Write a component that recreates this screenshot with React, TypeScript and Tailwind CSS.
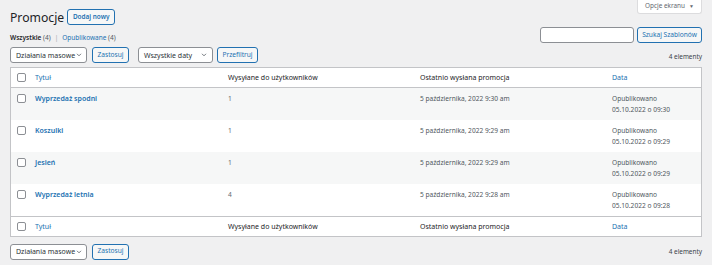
import React from "react";

const rows = [
  { t: "Wyprzedaż spodni", n: "1", last: "5 października, 2022 9:30 am", d: "05.10.2022 o 09:30" },
  { t: "Koszulki", n: "1", last: "5 października, 2022 9:29 am", d: "05.10.2022 o 09:29" },
  { t: "Jesień", n: "1", last: "5 października, 2022 9:29 am", d: "05.10.2022 o 09:29" },
  { t: "Wyprzedaż letnia", n: "4", last: "5 października, 2022 9:28 am", d: "05.10.2022 o 09:28" },
];

function Check() {
  return <span className="block w-[9px] h-[9px] border border-[#8c8f94] rounded-[2px] bg-white" />;
}

function Chevron() {
  return (
    <svg width="8" height="8" viewBox="0 0 20 20" className="shrink-0">
      <path d="M5 7 L10 12 L15 7" fill="none" stroke="#50575e" strokeWidth="2" />
    </svg>
  );
}

function Select({ label, w }: { label: string; w: string }) {
  return (
    <div className={`${w} h-[16px] border border-[#8c8f94] rounded-[3px] bg-white flex items-center justify-between pl-[5px] pr-[4px] text-[7px] text-[#2c3338] whitespace-nowrap`}>
      <span className="leading-none">{label}</span>
      <Chevron />
    </div>
  );
}

function Btn({ label, w }: { label: string; w: string }) {
  return (
    <div className={`${w} h-[16px] border border-[#2271b1] rounded-[3px] bg-[#f6f7f7] flex items-center justify-center text-[6.6px] text-[#2271b1] leading-none whitespace-nowrap`}>
      {label}
    </div>
  );
}

function HeadRow({ top }: { top: boolean }) {
  return (
    <div className={`flex items-center h-[20px] ${top ? "border-b" : "border-t"} border-[#c3c4c7] text-[7px] leading-none`}>
      <div className="w-[19px] pl-[6px]"><Check /></div>
      <div className="w-[193px] pl-[5px] text-[#2271b1]">Tytuł</div>
      <div className="w-[192px] pl-[5px] text-[#1d2327]">Wysyłane do użytkowników</div>
      <div className="w-[192px] pl-[5px] text-[#1d2327]">Ostatnio wysłana promocja</div>
      <div className="flex-1 pl-[5px] text-[#2271b1]">Data</div>
    </div>
  );
}

export default function App() {
  return (
    <div className="w-[712px] h-[265px] bg-[#f0f0f1] overflow-hidden px-[10px] font-['Noto_Sans',sans-serif] text-[#3c434a]">
      <div className="flex justify-between items-start h-[27px]">
        <div className="flex items-center pt-[9px] gap-[3px]">
          <h1 className="text-[12.2px] leading-[15px] text-[#1d2327] font-normal">Promocje</h1>
          <div className="h-[16px] w-[48px] border border-[#2271b1] rounded-[3px] bg-[#f6f7f7] flex items-center justify-center text-[6.4px] font-semibold text-[#2271b1] leading-none whitespace-nowrap">
            Dodaj nowy
          </div>
        </div>
        <div className="w-[65px] h-[14px] bg-white border border-t-0 border-[#dcdcde] rounded-b-[3px] flex items-center justify-center gap-[4px] text-[6.4px] text-[#646970] leading-none">
          <span>Opcje ekranu</span>
          <span className="text-[5px]">▼</span>
        </div>
      </div>

      <div className="flex justify-between items-start h-[20px]">
        <div className="pt-[6px] text-[6.5px] leading-[10px] flex items-center whitespace-nowrap">
          <span className="font-semibold text-[#1d2327]">Wszystkie</span>
          <span className="text-[#50575e]">&nbsp;(4)</span>
          <span className="text-[#a7aaad] px-[4px]">|</span>
          <span className="text-[#2271b1]">Opublikowane</span>
          <span className="text-[#50575e]">&nbsp;(4)</span>
        </div>
        <div className="flex gap-[3px]">
          <div className="w-[94px] h-[16px] bg-white border border-[#8c8f94] rounded-[3px]" />
          <Btn label="Szukaj Szablonów" w="w-[65px]" />
        </div>
      </div>

      <div className="flex justify-between items-center h-[16px]">
        <div className="flex items-center">
          <Select label="Działania masowe" w="w-[77px]" />
          <div className="ml-[5px]"><Btn label="Zastosuj" w="w-[37px]" /></div>
          <div className="ml-[9px]"><Select label="Wszystkie daty" w="w-[75px]" /></div>
          <div className="ml-[4px]"><Btn label="Przefiltruj" w="w-[41px]" /></div>
        </div>
        <div className="text-[6.4px] text-[#3c434a] pt-[3px]">4 elementy</div>
      </div>

      <div className="mt-[4px] bg-white border border-[#c3c4c7]">
        <HeadRow top />
        {rows.map((r, i) => (
          <div key={i} className={`flex items-start h-[32px] pt-[5px] text-[6.6px] leading-[11px] ${i % 2 === 0 ? "bg-[#f6f7f7]" : "bg-white"}`}>
            <div className="w-[19px] pl-[6px] pt-[1px]"><Check /></div>
            <div className="w-[193px] pl-[5px] font-semibold text-[#2271b1] text-[7px]">{r.t}</div>
            <div className="w-[192px] pl-[5px] text-[#646970]">{r.n}</div>
            <div className="w-[192px] pl-[5px] text-[#50575e]">{r.last}</div>
            <div className="flex-1 pl-[5px] text-[#50575e]">
              <div>Opublikowano</div>
              <div>{r.d}</div>
            </div>
          </div>
        ))}
        <HeadRow top={false} />
      </div>

      <div className="flex justify-between items-center h-[17px] mt-[6px]">
        <div className="flex items-center">
          <Select label="Działania masowe" w="w-[77px]" />
          <div className="ml-[5px]"><Btn label="Zastosuj" w="w-[37px]" /></div>
        </div>
        <div className="text-[6.4px] text-[#3c434a]">4 elementy</div>
      </div>
    </div>
  );
}
